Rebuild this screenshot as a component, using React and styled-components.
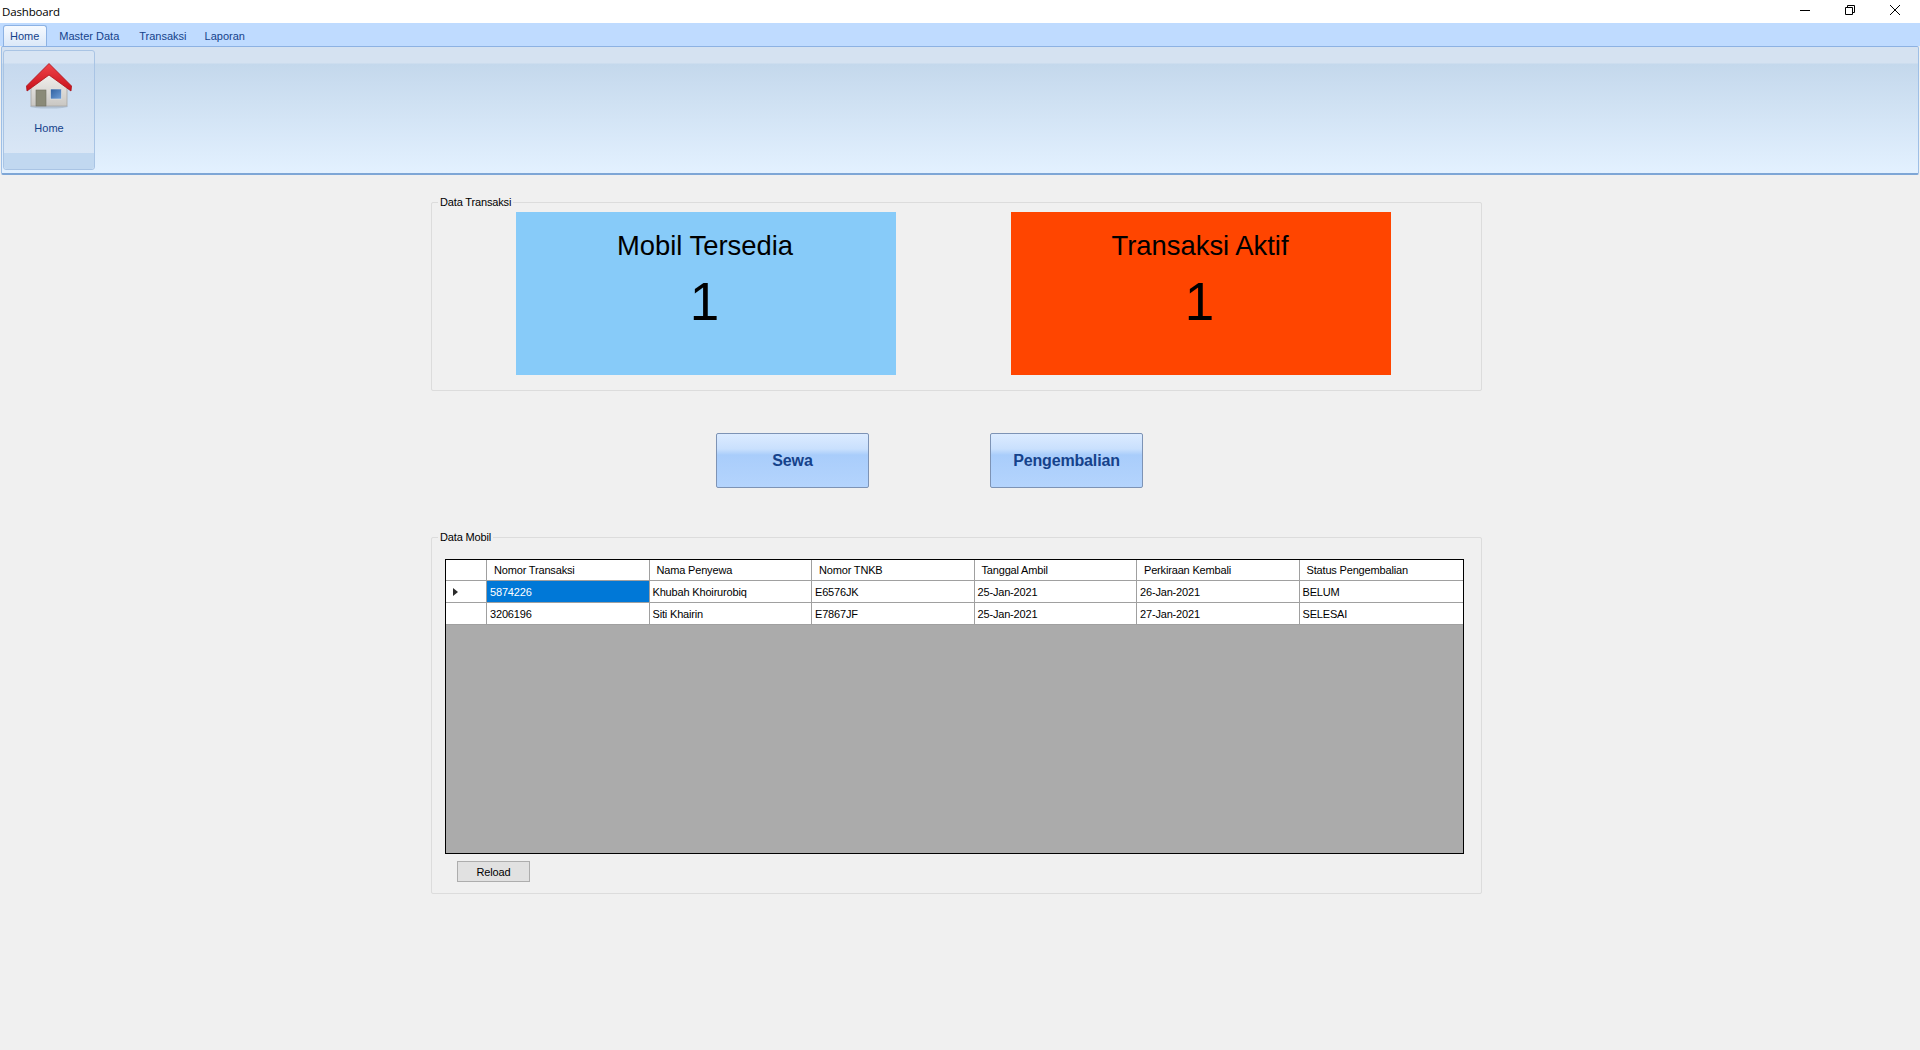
import React from 'react';
import styled, { createGlobalStyle } from 'styled-components';

const GlobalStyle = createGlobalStyle`
  html, body {
    margin: 0;
    padding: 0;
    background: #f0f0f0;
  }
  body {
    font-family: "Liberation Sans", Arial, sans-serif;
    font-size: 11px;
    color: #000;
  }
`;

const Window = styled.div`
  width: 1920px;
  height: 1050px;
  overflow: hidden;
  background: #f0f0f0;
`;

const TitleBar = styled.div`
  height: 23px;
  background: #fff;
  display: flex;
  align-items: center;
  justify-content: space-between;
  padding-left: 2px;
`;

const WindowTitle = styled.span`
  font-family: "Open Sans", sans-serif;
  font-size: 11.5px;
  letter-spacing: -0.15px;
  color: #000;
`;

const WindowControls = styled.div`
  display: flex;
  padding-right: 20px;
  margin-bottom: 3px;
  gap: 35px;
`;

const TabStrip = styled.div`
  height: 23px;
  background: #bfdbff;
  display: flex;
  align-items: flex-end;
  padding-left: 3px;
`;

const Tab = styled.div`
  height: 21px;
  box-sizing: border-box;
  padding: 0 7px 0 ${p => (p.$active ? '6px' : '7px')};
  margin-right: ${p => p.$gap}px;
  display: flex;
  align-items: center;
  color: #15428b;
  font-size: 11px;
  border-radius: 3px 3px 0 0;
  ${p => p.$active && `
    background: linear-gradient(#f6faff, #dbe8f8);
    border: 1px solid #8db2e3;
    border-bottom: none;
  `}
`;

const Ribbon = styled.div`
  height: 129px;
  box-sizing: border-box;
  margin: 0 1px;
  padding: 3px 0 3px 1px;
  border: 1px solid #9ebfe6;
  border-top-color: #8db2e3;
  border-bottom: 2px solid #7ea6d6;
  border-radius: 2px;
  background: linear-gradient(#d5e2f1 0, #d5e2f1 16px, #c4d8ec 17px, #e3f1ff 100%);
`;

const RibbonGroup = styled.div`
  width: 92px;
  height: 100%;
  box-sizing: border-box;
  border: 1px solid #a9c4e4;
  border-radius: 3px;
  display: flex;
  flex-direction: column;
  background: linear-gradient(#d7e4f3 0, #d7e4f3 12px, #c6d9ee 13px, #dde9f7 100%);
`;

const RibbonButton = styled.div`
  flex: 1;
  display: flex;
  flex-direction: column;
  align-items: center;
  padding-top: 11px;
  gap: 12px;
  color: #15428b;
  font-size: 11px;
`;

const GroupCaption = styled.div`
  height: 16px;
  background: #c1d8f0;
  border-radius: 0 0 3px 3px;
`;

const Content = styled.main`
  width: 1051px;
  margin-left: 431px;
  padding-top: 27px;
  display: flex;
  flex-direction: column;
`;

const GroupBox = styled.section`
  position: relative;
  box-sizing: border-box;
  height: ${p => p.$height}px;
  border: 1px solid #dcdcdc;
  border-radius: 2px;
`;

const Legend = styled.span`
  position: absolute;
  left: 6px;
  top: -7px;
  padding: 0 2px;
  background: #f0f0f0;
  font-size: 11px;
  line-height: 13px;
  letter-spacing: -0.15px;
`;

const Cards = styled.div`
  display: flex;
  padding: 9px 0 0 84px;
  gap: 115px;
`;

const Card = styled.div`
  width: 380px;
  height: 163px;
  background: ${p => p.$color};
  display: flex;
  flex-direction: column;
  align-items: center;
  color: #000;
`;

const CardTitle = styled.div`
  font-size: 27.4px;
  line-height: 31px;
  margin: 18px 2px 0 0;
`;

const CardValue = styled.div`
  font-size: 53px;
  line-height: 60px;
  margin: 11px 3px 0 0;
`;

const Actions = styled.div`
  display: flex;
  padding: 42px 0 0 285px;
  gap: 121px;
  margin-bottom: 49px;
`;

const ActionButton = styled.button`
  width: 153px;
  height: 55px;
  padding: 0;
  border: 1px solid #7d93b5;
  border-radius: 2px;
  background: linear-gradient(#dcebff 0, #c9e0fd 15px, #a9cdfb 21px, #b4d4fd 100%);
  color: #15428b;
  font-family: "Liberation Sans", Arial, sans-serif;
  font-size: 16px;
  font-weight: 700;
  letter-spacing: -0.15px;
`;

const DataGrid = styled.div`
  margin: 21px 0 0 13px;
  width: 1019px;
  height: 295px;
  box-sizing: border-box;
  border: 1px solid #000;
  background: #ababab;
`;

const GridRow = styled.div`
  display: grid;
  grid-template-columns: 41px repeat(6, 162.5px) 1fr;
  height: ${p => p.$height}px;
  box-sizing: border-box;
  border-bottom: 1px solid #a0a0a0;
  background: #fff;
`;

const Cell = styled.div`
  box-sizing: border-box;
  display: flex;
  align-items: center;
  padding-left: ${p => (p.$header ? 7 : 3)}px;
  border-right: 1px solid #a0a0a0;
  background: ${p => (p.$selected ? '#0078d7' : '#fff')};
  color: ${p => (p.$selected ? '#fff' : '#000')};
  font-size: 11px;
  letter-spacing: -0.17px;
  white-space: nowrap;
  &:last-child { border-right: none; }
`;

const RowHeader = styled(Cell)`
  padding-left: 7px;
`;

const RowPointer = styled.span`
  width: 0;
  height: 0;
  border-top: 4px solid transparent;
  border-bottom: 4px solid transparent;
  border-left: 5px solid #2b2b2b;
`;

const ReloadButton = styled.button`
  display: block;
  margin: 7px 0 0 25px;
  width: 73px;
  height: 21px;
  padding: 0;
  border: 1px solid #adadad;
  background: #e1e1e1;
  color: #000;
  font-family: "Liberation Sans", Arial, sans-serif;
  font-size: 11px;
  letter-spacing: -0.15px;
`;

const columns = ['Nomor Transaksi', 'Nama Penyewa', 'Nomor TNKB', 'Tanggal Ambil', 'Perkiraan Kembali', 'Status Pengembalian'];

const rows = [
  ['5874226', 'Khubah Khoirurobiq', 'E6576JK', '25-Jan-2021', '26-Jan-2021', 'BELUM'],
  ['3206196', 'Siti Khairin', 'E7867JF', '25-Jan-2021', '27-Jan-2021', 'SELESAI'],
];

function HomeIcon() {
  return (
    <svg width="48" height="48" viewBox="0 0 48 48">
      <defs>
        <linearGradient id="roof" x1="0" y1="0" x2="0" y2="1">
          <stop offset="0" stopColor="#f0454a" />
          <stop offset="1" stopColor="#c8101a" />
        </linearGradient>
        <linearGradient id="wall" x1="0" y1="0" x2="0" y2="1">
          <stop offset="0" stopColor="#f4f2ef" />
          <stop offset="1" stopColor="#c9c7c3" />
        </linearGradient>
        <linearGradient id="glass" x1="0" y1="0" x2="1" y2="1">
          <stop offset="0" stopColor="#2f5f9f" />
          <stop offset="1" stopColor="#6f9fd8" />
        </linearGradient>
      </defs>
      <ellipse cx="24" cy="44.5" rx="19" ry="2" fill="#8f9fb2" opacity="0.45" />
      <path d="M6 25 L24 10 L42 25 V44 H6 Z" fill="url(#wall)" stroke="#a8a6a2" strokeWidth="0.8" />
      <rect x="11" y="28" width="10" height="16" fill="#8a8a78" stroke="#6f6f62" strokeWidth="0.6" />
      <rect x="25.5" y="27" width="11" height="10" fill="url(#glass)" stroke="#e6e6e6" strokeWidth="0.6" />
      <path d="M1.5 24 L24 1.5 L46.5 24 L46 29 L24 13 L2 29 Z" fill="url(#roof)" stroke="#a80f16" strokeWidth="0.8" strokeLinejoin="round" />
    </svg>
  );
}

function MinimizeIcon() {
  return (
    <svg width="10" height="10" viewBox="0 0 10 10">
      <path d="M0 5.5 H10" stroke="#000" strokeWidth="1" fill="none" />
    </svg>
  );
}

function RestoreIcon() {
  return (
    <svg width="10" height="10" viewBox="0 0 10 10">
      <path d="M2.5 2.5 V0.5 H9.5 V7.5 H7.5 M0.5 2.5 H7.5 V9.5 H0.5 Z" stroke="#000" strokeWidth="1" fill="none" />
    </svg>
  );
}

function CloseIcon() {
  return (
    <svg width="10" height="10" viewBox="0 0 10 10">
      <path d="M0 0 L10 10 M10 0 L0 10" stroke="#000" strokeWidth="1" fill="none" />
    </svg>
  );
}

export default function App() {
  return (
    <Window>
      <GlobalStyle />
      <TitleBar>
        <WindowTitle>Dashboard</WindowTitle>
        <WindowControls>
          <MinimizeIcon />
          <RestoreIcon />
          <CloseIcon />
        </WindowControls>
      </TitleBar>
      <TabStrip>
        <Tab $active $gap={5}>Home</Tab>
        <Tab $gap={6}>Master Data</Tab>
        <Tab $gap={4}>Transaksi</Tab>
        <Tab $gap={0}>Laporan</Tab>
      </TabStrip>
      <Ribbon>
        <RibbonGroup>
          <RibbonButton>
            <HomeIcon />
            <span>Home</span>
          </RibbonButton>
          <GroupCaption />
        </RibbonGroup>
      </Ribbon>
      <Content>
        <GroupBox $height={189}>
          <Legend>Data Transaksi</Legend>
          <Cards>
            <Card $color="#87cbf9">
              <CardTitle>Mobil Tersedia</CardTitle>
              <CardValue>1</CardValue>
            </Card>
            <Card $color="#ff4500">
              <CardTitle>Transaksi Aktif</CardTitle>
              <CardValue>1</CardValue>
            </Card>
          </Cards>
        </GroupBox>
        <Actions>
          <ActionButton>Sewa</ActionButton>
          <ActionButton>Pengembalian</ActionButton>
        </Actions>
        <GroupBox $height={357}>
          <Legend>Data Mobil</Legend>
          <DataGrid>
            <GridRow $height={21}>
              <Cell />
              {columns.map(name => (
                <Cell $header key={name}>{name}</Cell>
              ))}
            </GridRow>
            {rows.map((row, i) => (
              <GridRow $height={22} key={row[0]}>
                <RowHeader>{i === 0 && <RowPointer />}</RowHeader>
                {row.map((value, j) => (
                  <Cell $selected={i === 0 && j === 0} key={j}>{value}</Cell>
                ))}
              </GridRow>
            ))}
          </DataGrid>
          <ReloadButton>Reload</ReloadButton>
        </GroupBox>
      </Content>
    </Window>
  );
}
